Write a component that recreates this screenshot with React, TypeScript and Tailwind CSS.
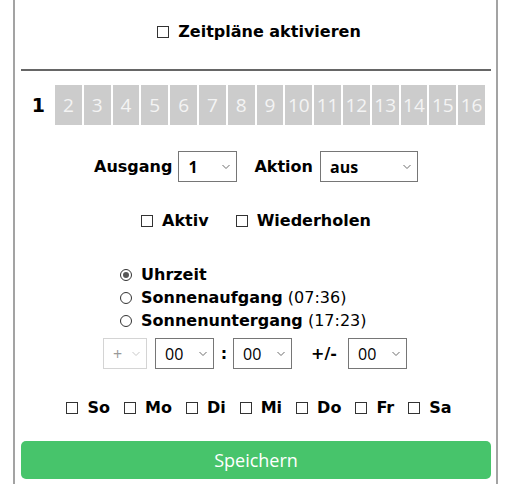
import { useState } from "react";

const tabs = Array.from({ length: 15 }, (_, i) => i + 2);
const days = ["So", "Mo", "Di", "Mi", "Do", "Fr", "Sa"];

function Box() {
  return <span className="inline-block w-[12px] h-[12px] border border-[#333] bg-white shrink-0" />;
}

function Radio({ on }: { on?: boolean }) {
  return (
    <span className="inline-flex items-center justify-center w-[12px] h-[12px] rounded-full border border-[#333] bg-white shrink-0">
      {on && <span className="w-[6px] h-[6px] rounded-full bg-[#555]" />}
    </span>
  );
}

function Chevron({ light }: { light?: boolean }) {
  return (
    <svg width="8" height="5" viewBox="0 0 8 5" className="absolute right-[7px] top-1/2 -translate-y-1/2 pointer-events-none">
      <path d="M0.5 0.5 L4 4 L7.5 0.5" fill="none" stroke={light ? "#c8c8c8" : "#6d6d6d"} strokeWidth="1" />
    </svg>
  );
}

function Select({ value, options, w, disabled }: { value: string; options: string[]; w: string; disabled?: boolean }) {
  const [v, setV] = useState(value);
  return (
    <div className={`relative h-[31px] ${w}`}>
      <select
        value={v}
        disabled={disabled}
        onChange={(e) => setV(e.target.value)}
        className={`appearance-none w-full h-full bg-white pl-[9px] pr-[20px] text-[16px] font-['Open_Sans',sans-serif] outline-none rounded-none ${
          disabled ? "border border-[#d4d4d4] text-[#999]" : "border border-[#767676] text-black"
        }`}
      >
        {options.map((o) => (
          <option key={o}>{o}</option>
        ))}
      </select>
      <Chevron light={disabled} />
    </div>
  );
}

export default function App() {
  const [tab, setTab] = useState(1);
  const [mode, setMode] = useState(0);
  const mins = Array.from({ length: 60 }, (_, i) => String(i).padStart(2, "0"));
  const hours = Array.from({ length: 24 }, (_, i) => String(i).padStart(2, "0"));

  return (
    <div className="bg-white w-[507px] h-[484px] overflow-hidden font-['DejaVu_Sans',sans-serif] text-[16px] text-black">
      <div className="ml-[13px] w-[485px] h-full border-x-2 border-[#a3a3a3] pl-[6px] pr-[5px]">
        <div className="pt-[22px] h-[69px] flex justify-center">
          <label className="flex items-center gap-[9px] font-bold leading-[20px] h-[20px] pl-[6px]">
            <Box />
            Zeitpläne aktivieren
          </label>
        </div>
        <div className="border-t-2 border-[#666]" />

        <div className="mt-[14px] flex h-[40px]">
          <div className="w-[32px] flex items-center justify-end pr-[8px] text-[19px] font-bold">1</div>
          <div className="w-[430px] ml-[2px] flex gap-[2px]">
            {tabs.map((n) => (
              <button
                key={n}
                onClick={() => setTab(n)}
                className={`flex-1 flex items-center justify-center text-[19px] font-['Open_Sans',sans-serif] ${
                  tab === n ? "bg-[#aaa] text-white" : "bg-[#cccccc] text-[#f4f4f4]"
                }`}
              >
                {n}
              </button>
            ))}
          </div>
        </div>

        <div className="mt-[26px] flex justify-center items-center font-bold">
          <span>Ausgang</span>
          <div className="ml-[6px]">
            <Select value="1" options={["1", "2", "3", "4"]} w="w-[59px]" />
          </div>
          <span className="ml-[17px]">Aktion</span>
          <div className="ml-[7px]">
            <Select value="aus" options={["aus", "ein", "umschalten"]} w="w-[98px]" />
          </div>
        </div>

        <div className="mt-[29px] flex justify-center items-center font-bold h-[20px]">
          <label className="flex items-center gap-[9px]">
            <Box />
            Aktiv
          </label>
          <label className="flex items-center gap-[9px] ml-[27px]">
            <Box />
            Wiederholen
          </label>
        </div>

        <div className="mt-[32px] ml-[99px] flex flex-col">
          {[
            ["Uhrzeit", ""],
            ["Sonnenaufgang", " (07:36)"],
            ["Sonnenuntergang", " (17:23)"],
          ].map(([a, b], i) => (
            <label key={a} onClick={() => setMode(i)} className="flex items-center h-[23px] gap-[9px]">
              <Radio on={mode === i} />
              <span>
                <span className="font-bold">{a}</span>
                {b}
              </span>
            </label>
          ))}
        </div>

        <div className="mt-[6px] flex justify-center items-center pr-[2px]">
          <Select value="+" options={["+", "-"]} w="w-[44px]" disabled />
          <div className="ml-[8px]">
            <Select value="00" options={hours} w="w-[59px]" />
          </div>
          <span className="w-[19px] pl-[1px] text-center font-bold">:</span>
          <Select value="00" options={mins} w="w-[59px]" />
          <span className="w-[56px] pl-[19px] font-bold">+/-</span>
          <Select value="00" options={mins} w="w-[59px]" />
        </div>

        <div className="mt-[29px] flex justify-center items-center font-bold h-[20px] gap-[14px] pl-[6px]">
          {days.map((d) => (
            <label key={d} className="flex items-center gap-[9px]">
              <Box />
              {d}
            </label>
          ))}
        </div>

        <button className="mt-[23px] w-full h-[38px] rounded-[5px] bg-[#47c46b] text-white text-[18px] font-['Open_Sans',sans-serif]">
          Speichern
        </button>
      </div>
    </div>
  );
}
